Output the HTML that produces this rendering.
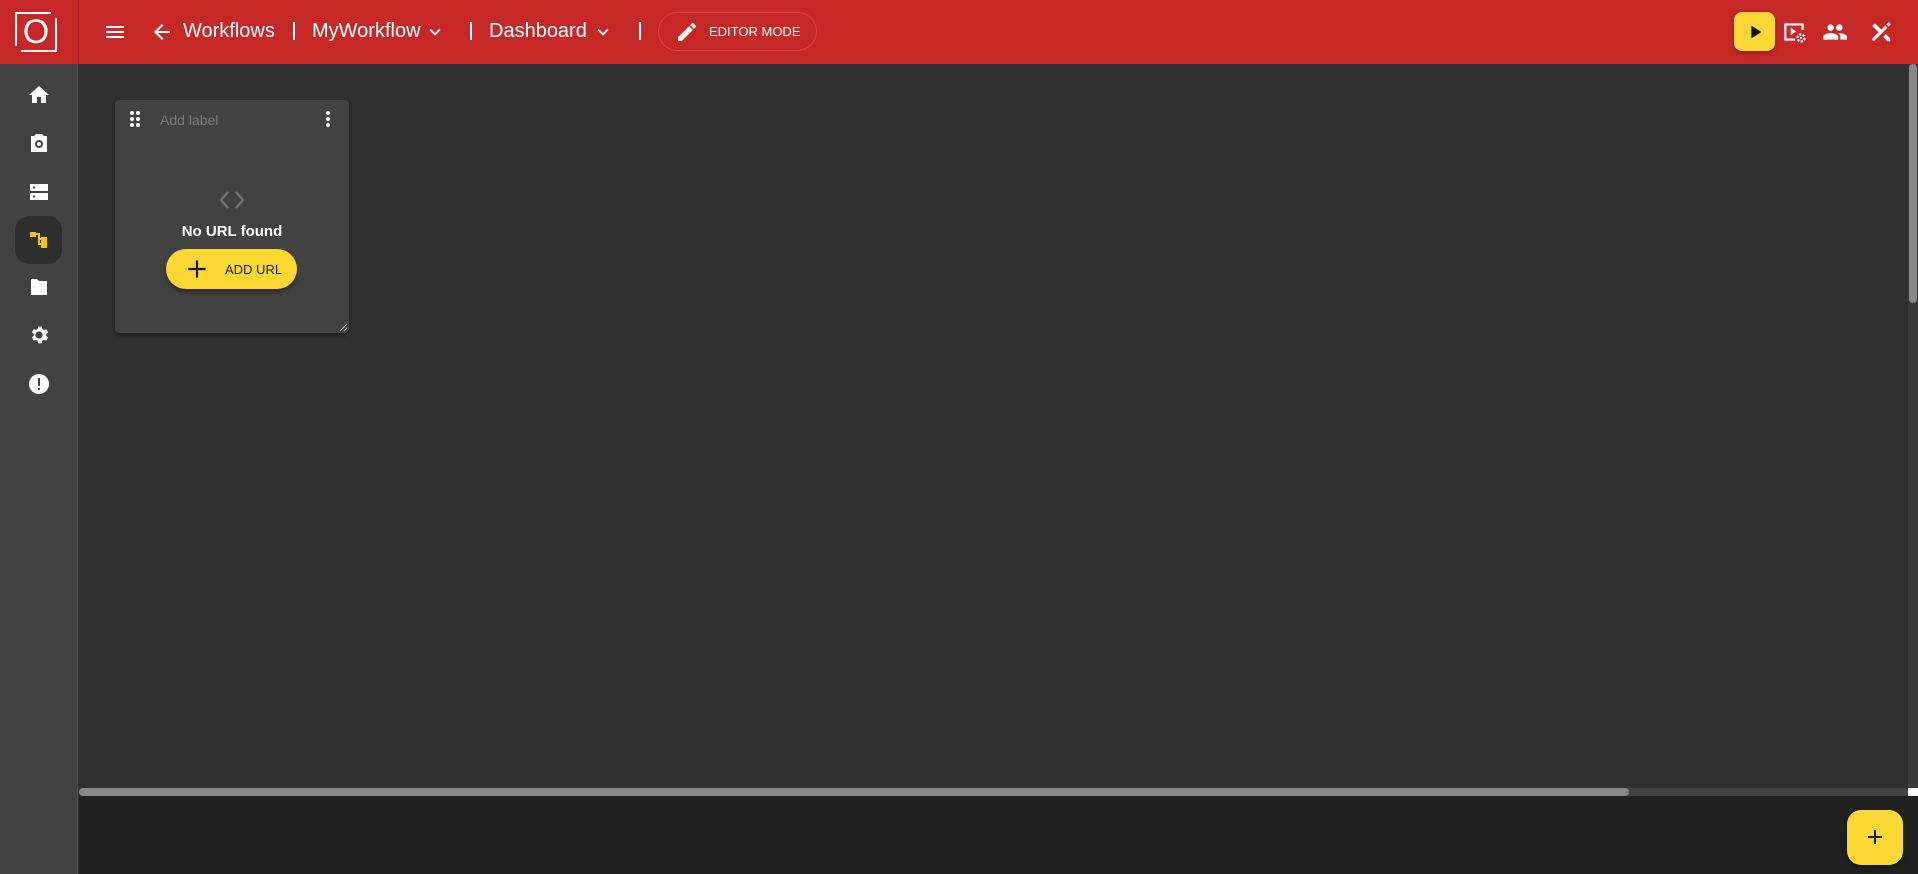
<!DOCTYPE html>
<html><head><meta charset="utf-8"><style>
*{margin:0;padding:0;box-sizing:border-box}
body{width:1918px;height:874px;overflow:hidden;background:#303030;font-family:"Liberation Sans",sans-serif;position:relative;color:#fff}
.abs{position:absolute}
.top{left:0;top:0;width:1918px;height:64px;background:#c62828}
.side{left:0;top:64px;width:78px;height:810px;background:#424242;border-right:1px solid #555}
.bottom{left:79px;top:796px;width:1839px;height:78px;background:#212121}
.t{font-size:20px;color:#fff;top:20px;white-space:nowrap}
.sep{width:2px;height:18px;background:#fff;top:22px}
svg{position:absolute}
</style></head><body>
<div class="abs top"></div>
<div class="abs" style="left:78px;top:0;width:1px;height:64px;background:#a82020"></div>
<!-- logo -->
<div class="abs" style="left:15px;top:12px;width:36px;height:2px;background:#fff"></div>
<div class="abs" style="left:15px;top:12px;width:2px;height:34px;background:#fff"></div>
<div class="abs" style="left:21px;top:50px;width:36px;height:2px;background:#fff"></div>
<div class="abs" style="left:55px;top:18px;width:2px;height:34px;background:#fff"></div>
<div class="abs" style="left:19px;top:15px;width:34px;text-align:center;font-size:34px;line-height:34px;color:#fff">O</div>
<!-- hamburger -->
<svg style="left:103px;top:20px" width="24" height="24" viewBox="0 0 24 24"><path d="M3 6h18v2H3zM3 11h18v2H3zM3 16h18v2H3z" fill="#fff"/></svg>
<svg style="left:150px;top:20px" width="24" height="24" viewBox="0 0 24 24"><path d="M20 11H7.83l5.59-5.59L12 4l-8 8 8 8 1.41-1.41L7.83 13H20v-2z" fill="#fff"/></svg>
<div class="abs t" style="left:183px">Workflows</div>
<div class="abs sep" style="left:293px"></div>
<div class="abs t" style="left:312px">MyWorkflow</div>
<svg style="left:424px;top:21px" width="22" height="22" viewBox="0 0 24 24"><path d="M7.41 8.59L12 13.17l4.59-4.58L18 10l-6 6-6-6z" fill="#fff"/></svg>
<div class="abs sep" style="left:470px"></div>
<div class="abs t" style="left:489px">Dashboard</div>
<svg style="left:592px;top:21px" width="22" height="22" viewBox="0 0 24 24"><path d="M7.41 8.59L12 13.17l4.59-4.58L18 10l-6 6-6-6z" fill="#fff"/></svg>
<div class="abs sep" style="left:639px"></div>
<div class="abs" style="left:658px;top:12px;width:159px;height:39px;border:1px solid rgba(255,255,255,.15);border-radius:20px"></div>
<svg style="left:675px;top:20px" width="24" height="24" viewBox="0 0 24 24"><path d="M3 17.25V21h3.75L17.81 9.94l-3.75-3.75L3 17.25zM20.71 7.04a1 1 0 000-1.41l-2.34-2.34a1 1 0 00-1.41 0l-1.83 1.83 3.75 3.75 1.83-1.83z" fill="#fff"/></svg>
<div class="abs" style="left:709px;top:24px;font-size:13px;color:#fff">EDITOR MODE</div>
<!-- right top -->
<div class="abs" style="left:1734px;top:12px;width:41px;height:39px;background:#fdd835;border-radius:8px;box-shadow:0 2px 4px rgba(0,0,0,.3)"></div>
<svg style="left:1744px;top:21px" width="22" height="22" viewBox="0 0 24 24"><path d="M8 5v14l11-7z" fill="#111"/></svg>
<svg style="left:1781px;top:19px" width="26" height="26" viewBox="0 0 24 24"><path d="M3 4h18v6h-2V6H5v12h8v2H3z" fill="#fff"/><path d="M9 8v7l5-3.5z" fill="#fff"/><circle cx="18.5" cy="17.5" r="3.2" fill="none" stroke="#fff" stroke-width="2.2" stroke-dasharray="2 1.3"/><circle cx="18.5" cy="17.5" r="1" fill="#fff"/></svg>
<svg style="left:1822px;top:19px" width="26" height="26" viewBox="0 0 24 24"><path d="M16 11c1.66 0 2.99-1.34 2.99-3S17.66 5 16 5c-1.660 0-3 1.34-3 3s1.34 3 3 3zm-8 0c1.66 0 2.99-1.34 2.99-3S9.66 5 8 5C6.34 5 5 6.34 5 8s1.34 3 3 3zm0 2c-2.33 0-7 1.17-7 3.5V19h14v-2.5c0-2.330-4.67-3.5-7-3.5zm8 0c-.29 0-.62.02-.97.05 1.16.84 1.97 1.97 1.97 3.45V19h6v-2.5c0-2.33-4.67-3.5-7-3.5z" fill="#fff"/></svg>
<svg style="left:1868px;top:19px" width="26" height="26" viewBox="0 0 24 24"><path d="M4 6.5L6.5 4l6 6-2.5 2.5z" fill="#fff"/><path d="M14 16.5l2.5-2.5 4 4V20.5H18z" fill="#fff"/><path d="M4 18L16 6l2 2L6 20H4z" fill="#fff"/><path d="M17 5l2-2 2 2-2 2z" fill="#fff"/></svg>
<!-- sidebar -->
<div class="abs side"></div>
<div class="abs" style="left:15px;top:216px;width:47px;height:48px;background:#2e2e2e;border-radius:14px"></div>
<svg style="left:27px;top:83px" width="24" height="24" viewBox="0 0 24 24"><path d="M10 20v-6h4v6h5v-8h3L12 3 2 12h3v8z" fill="#fff"/></svg>
<svg style="left:27px;top:131px" width="24" height="24" viewBox="0 0 24 24"><path d="M9 3L7.17 5H4v16h16V5h-3.17L15 3zm3 14a4 4 0 110-8 4 4 0 010 8zm0-2a2 2 0 100-4 2 2 0 000 4z" fill="#fff"/></svg>
<svg style="left:27px;top:180px" width="24" height="24" viewBox="0 0 24 24"><path d="M3 4h18v7H3zm0 9h18v7H3zM6 6.5v2h2v-2zm0 9v2h2v-2z" fill="#fff" fill-rule="evenodd"/></svg>
<svg style="left:27px;top:228px" width="24" height="24" viewBox="0 0 24 24"><path d="M3 4h6v5H3zM9 5h4v2H9zM11 5h2v12h-2zM11 10h3v2h-3zM11 15h3v2h-3zM14 9h6v5h-6zM14 14h6v6h-6z" fill="#f5c518"/></svg>
<svg style="left:27px;top:275px" width="24" height="24" viewBox="0 0 24 24"><path d="M10 4H4v16h16V6h-8z" fill="#fff"/></svg>
<svg style="left:27px;top:323px" width="24" height="24" viewBox="0 0 24 24"><path d="M19.14 12.94c.04-.3.06-.61.06-.94s-.02-.64-.07-.94l2.03-1.58-1.92-3.32-2.39.96a7 7 0 00-1.62-.94L14.9 3.5h-3.8l-.36 2.54c-.59.24-1.13.56-1.62.94l-2.39-.96-1.92 3.32 2.03 1.58c-.05.3-.09.63-.09.94s.02.64.07.94l-2.03 1.58 1.92 3.32 2.39-.96c.5.38 1.03.7 1.62.94l.36 2.54h3.84l.36-2.54c.59-.24 1.13-.56 1.62-.94l2.39.96 1.92-3.32zM12 15.6a3.6 3.6 0 110-7.2 3.6 3.6 0 010 7.2z" fill="#fff"/></svg>
<svg style="left:27px;top:372px" width="24" height="24" viewBox="0 0 24 24"><circle cx="12" cy="12" r="10" fill="#fff"/><path d="M11 6h2v8h-2zm0 10h2v2h-2z" fill="#424242"/></svg>
<!-- card -->
<div class="abs" style="left:115px;top:100px;width:234px;height:233px;background:#424242;border-radius:4px;box-shadow:0 2px 3px rgba(0,0,0,.35)"></div>
<svg style="left:125px;top:109px" width="20" height="20" viewBox="0 0 20 20"><g fill="#fff"><circle cx="7" cy="4" r="2"/><circle cx="13" cy="4" r="2"/><circle cx="7" cy="10" r="2"/><circle cx="13" cy="10" r="2"/><circle cx="7" cy="16" r="2"/><circle cx="13" cy="16" r="2"/></g></svg>
<div class="abs" style="left:160px;top:112px;font-size:14px;color:#7a7a7a">Add label</div>
<svg style="left:318px;top:109px" width="20" height="20" viewBox="0 0 20 20"><g fill="#fff"><circle cx="10" cy="4" r="2"/><circle cx="10" cy="10" r="2"/><circle cx="10" cy="16" r="2"/></g></svg>
<svg style="left:217px;top:187px" width="30" height="26" viewBox="0 0 30 26"><path d="M11 5L4 13l7 8M19 5l7 8-7 8" fill="none" stroke="#777" stroke-width="2.4"/></svg>
<div class="abs" style="left:115px;top:223px;width:234px;text-align:center;font-size:15px;font-weight:bold;color:#fff">No URL found</div>
<div class="abs" style="left:166px;top:249px;width:131px;height:40px;background:#fdd835;border-radius:20px;box-shadow:0 3px 4px rgba(0,0,0,.35)"></div>
<svg style="left:184px;top:256px" width="26" height="26" viewBox="0 0 24 24"><path d="M11 4h2v7h7v2h-7v7h-2v-7H4v-2h7z" fill="#111"/></svg>
<div class="abs" style="left:225px;top:262px;font-size:13px;color:#222">ADD URL</div>
<svg style="left:339px;top:323px" width="9" height="9" viewBox="0 0 9 9"><path d="M1 8L8 1M5 8L8 5" stroke="#ccc" stroke-width="1"/></svg>
<!-- scrollbars -->
<div class="abs" style="left:1908px;top:64px;width:10px;height:724px;background:#3a3a3a"></div>
<div class="abs" style="left:1909px;top:64px;width:8px;height:239px;background:#888;border-radius:4px"></div>
<div class="abs" style="left:79px;top:788px;width:1829px;height:8px;background:#444;border-radius:4px"></div>
<div class="abs" style="left:79px;top:788px;width:1550px;height:8px;background:#888;border-radius:4px"></div>
<div class="abs" style="left:1908px;top:788px;width:10px;height:8px;background:#fff"></div>
<div class="abs bottom"></div>
<div class="abs" style="left:1847px;top:810px;width:56px;height:55px;background:#fdd835;border-radius:14px;box-shadow:0 3px 5px rgba(0,0,0,.4)"></div>
<svg style="left:1863px;top:825px" width="24" height="24" viewBox="0 0 24 24"><path d="M11 5h2v6h6v2h-6v6h-2v-6H5v-2h6z" fill="#111"/></svg>
</body></html>
